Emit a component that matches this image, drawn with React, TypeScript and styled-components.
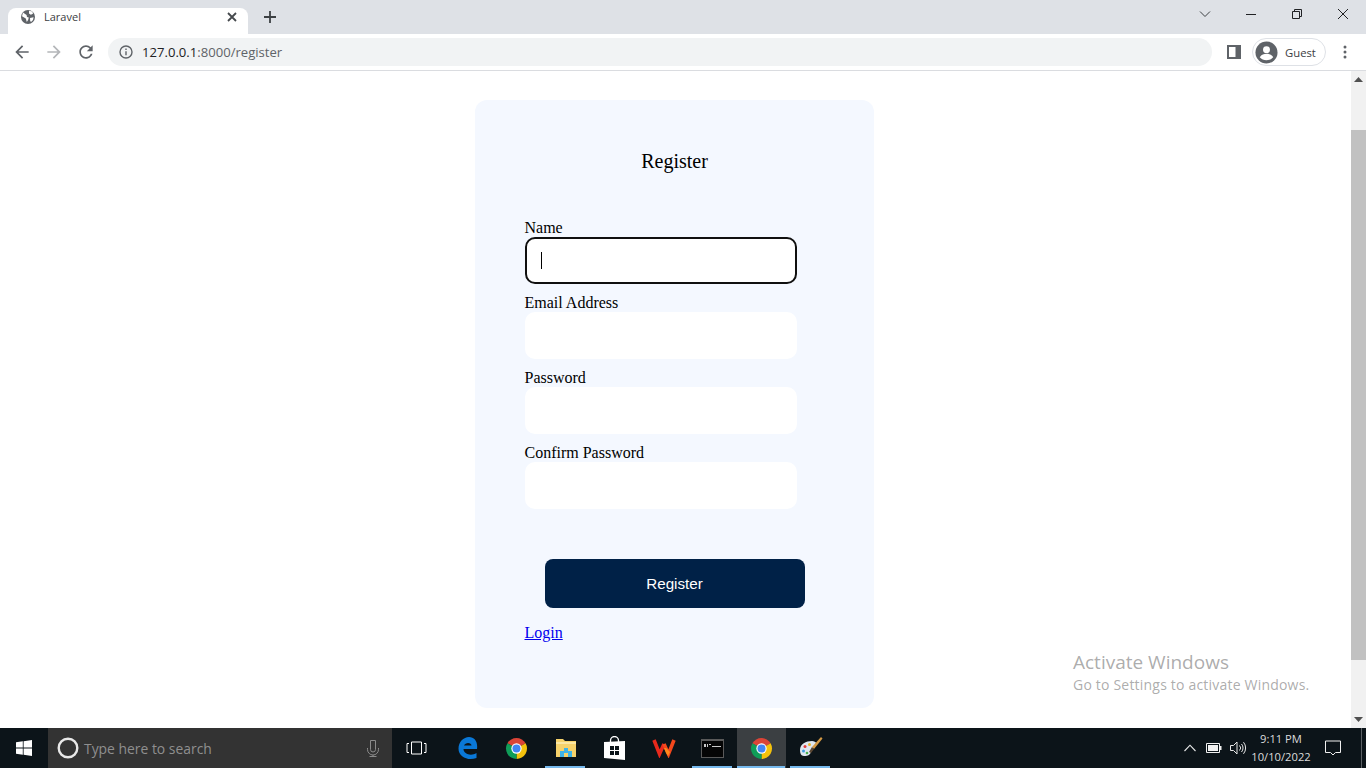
import styled, { createGlobalStyle } from 'styled-components';

const GlobalStyle = createGlobalStyle`
    html, body {
        margin: 0;
        padding: 0;
        height: 100%;
        overflow: hidden;
    }
    * {
        box-sizing: border-box;
    }
`;

const Screen = styled.div`
    width: 1366px;
    height: 768px;
    display: flex;
    flex-direction: column;
    background-color: #fff;
    font-family: "Liberation Serif", "Times New Roman", serif;
    overflow: hidden;
`;

/* browser chrome */
const TabStrip = styled.div`
    height: 34px;
    flex-shrink: 0;
    display: flex;
    align-items: flex-end;
    background-color: #dee1e6;
`;

const Tab = styled.div`
    width: 240px;
    height: 26px;
    margin-left: 8px;
    padding: 0 8px 8px 12px;
    display: flex;
    align-items: center;
    background-color: #fff;
    border-radius: 8px 8px 0 0;
`;

const TabTitle = styled.span`
    flex: 1;
    margin-left: 8px;
    padding-bottom: 2px;
    font-family: "Open Sans", sans-serif;
    font-size: 11px;
    color: #3c4043;
`;

const NewTab = styled.div`
    width: 28px;
    height: 26px;
    margin-left: 8px;
    padding-bottom: 8px;
    display: flex;
    align-items: center;
    justify-content: center;
`;

const WindowControls = styled.div`
    height: 34px;
    margin-left: auto;
    display: flex;
`;

const WindowButton = styled.div`
    width: 46px;
    height: 28px;
    display: flex;
    align-items: center;
    justify-content: center;
`;

const Toolbar = styled.div`
    height: 37px;
    flex-shrink: 0;
    padding: 0 5px 0 6px;
    display: flex;
    align-items: center;
    background-color: #fff;
    border-bottom: 1px solid #dadce0;
`;

const NavButton = styled.div`
    width: 32px;
    height: 28px;
    display: flex;
    align-items: center;
    justify-content: center;
`;

const Omnibox = styled.div`
    flex: 1;
    height: 28px;
    margin: 0 6px;
    padding-left: 10px;
    display: flex;
    align-items: center;
    background-color: #f1f3f4;
    border-radius: 14px;
`;

const Url = styled.span`
    margin-left: 8px;
    font-family: "Open Sans", sans-serif;
    font-size: 13.1px;
    color: #5f6368;
`;

const Host = styled.span`
    color: #202124;
`;

const GuestPill = styled.div`
    width: 74px;
    height: 28px;
    margin: 0 3px 0 2px;
    padding-left: 2px;
    display: flex;
    align-items: center;
    gap: 7px;
    border: 1px solid #dee1e6;
    border-radius: 14px;
    font-family: "Open Sans", sans-serif;
    font-size: 11.3px;
    color: #3c4043;
`;

/* page */
const Viewport = styled.div`
    flex: 1;
    min-height: 0;
    display: flex;
    position: relative;
`;

const Page = styled.main`
    flex: 1;
    padding: 29px 2px 0 0;
    display: flex;
    justify-content: center;
    align-items: flex-start;
`;

const Card = styled.form`
    width: 399px;
    height: 608px;
    padding: 50px 49.5px 0;
    background-color: #f4f8ff;
    border-radius: 12px;
`;

const Title = styled.div`
    margin-bottom: 46px;
    font-size: 20px;
    line-height: 23px;
    text-align: center;
    color: #000;
`;

const Label = styled.label`
    display: block;
    font-size: 16px;
    line-height: 18px;
    color: #000;
`;

const Field = styled.div<{ $focused?: boolean }>`
    width: 272px;
    height: 47px;
    margin-bottom: 10px;
    padding-left: 14px;
    display: flex;
    align-items: center;
    background-color: #fff;
    border-radius: 10px;
    border: ${p => (p.$focused ? '2px solid #101010' : '2px solid #fff')};
`;

const Caret = styled.span`
    width: 1px;
    height: 17px;
    background-color: #000;
`;

const SubmitButton = styled.button`
    display: block;
    width: 260px;
    height: 49px;
    margin: 50px auto 0;
    padding: 0;
    border: none;
    border-radius: 8px;
    background-color: #002147;
    color: #fff;
    font-family: "Liberation Sans", Arial, sans-serif;
    font-size: 15.2px;
`;

const LoginLink = styled.a`
    display: block;
    margin-top: 16px;
    font-size: 16px;
    line-height: 18px;
    color: #0000ee;
    text-decoration: underline;
`;

const Scrollbar = styled.div`
    width: 15px;
    flex-shrink: 0;
    display: flex;
    flex-direction: column;
    align-items: center;
    background-color: #f1f1f1;
`;

const ScrollArrow = styled.div`
    width: 15px;
    height: 17px;
    display: flex;
    align-items: center;
    justify-content: center;
`;

const ScrollThumb = styled.div`
    width: 15px;
    height: 530px;
    margin: 42px 0 auto;
    background-color: #c1c1c1;
`;

const Watermark = styled.div`
    position: absolute;
    left: 1073px;
    top: 578px;
    font-family: "Open Sans", sans-serif;
    color: rgba(120, 120, 120, 0.62);
`;

const WatermarkTitle = styled.div`
    font-size: 19px;
    line-height: 26px;
`;

const WatermarkText = styled.div`
    font-size: 14px;
    line-height: 19px;
    letter-spacing: 0.2px;
    white-space: nowrap;
`;

/* taskbar */
const Taskbar = styled.footer`
    height: 40px;
    flex-shrink: 0;
    display: flex;
    align-items: stretch;
    background-color: #0c1419;
`;

const StartButton = styled.div`
    width: 48px;
    display: flex;
    align-items: center;
    justify-content: center;
`;

const SearchBox = styled.div`
    width: 344px;
    padding: 0 12px 0 9px;
    display: flex;
    align-items: center;
    background-color: #333;
`;

const SearchText = styled.span`
    flex: 1;
    margin-left: 5px;
    font-family: "Open Sans", sans-serif;
    font-size: 13.9px;
    color: #8f8f8f;
`;

const TaskView = styled.div`
    width: 51px;
    padding-right: 3px;
    display: flex;
    align-items: center;
    justify-content: center;
`;

const AppCell = styled.div<{ $open?: boolean; $active?: boolean }>`
    width: 49px;
    position: relative;
    display: flex;
    align-items: center;
    justify-content: center;
    background-color: ${p => (p.$active ? '#3b3f42' : 'transparent')};

    &::after {
        content: '';
        display: ${p => (p.$open ? 'block' : 'none')};
        position: absolute;
        bottom: 0;
        left: ${p => (p.$active ? '0' : '4px')};
        right: ${p => (p.$active ? '1px' : '5px')};
        height: 2px;
        background-color: #76b9ed;
    }
`;

const Tray = styled.div`
    margin-left: auto;
    display: flex;
    align-items: stretch;
`;

const TrayIcon = styled.div`
    width: 24px;
    display: flex;
    align-items: center;
    justify-content: center;
`;

const Clock = styled.div`
    width: 62px;
    display: flex;
    flex-direction: column;
    justify-content: center;
    align-items: center;
    font-family: "Open Sans", sans-serif;
    font-size: 11.2px;
    line-height: 18px;
    color: #dcdcdc;
    white-space: nowrap;
`;

const NotifyButton = styled.div`
    width: 42px;
    display: flex;
    align-items: center;
    justify-content: center;
`;

const ShowDesktop = styled.div`
    width: 5px;
    margin-left: 7px;
    border-left: 1px solid #5b6064;
`;

const ChromeIcon = () => (
    <svg width="23" height="23" viewBox="0 0 24 24">
        <path d="M12 12L2.5 6.5A11 11 0 0 1 21.5 6.5Z" fill="#db4437" />
        <path d="M12 12L21.5 6.5A11 11 0 0 1 12 23Z" fill="#f4c20d" />
        <path d="M12 12L12 23A11 11 0 0 1 2.5 6.5Z" fill="#0f9d58" />
        <circle cx="12" cy="12" r="5.4" fill="#fff" />
        <circle cx="12" cy="12" r="4.2" fill="#4285f4" />
    </svg>
);

function App() {
    return (
        <Screen>
            <GlobalStyle />
            <TabStrip>
                <Tab>
                    <svg width="16" height="16" viewBox="0 0 16 16">
                        <circle cx="8" cy="8" r="7" fill="#5f6368" />
                        <path d="M3 3.6L6.6 6l.4 2 1.8.6-.6 2.2L6.8 13 5.8 9.6 2 7.2Z M9 1.8l3.4.8.6 2.2-2.2 1L9 4.4Z M10 9l3.6-.8L13 11l-2 2-.8-1Z" fill="#fff" />
                    </svg>
                    <TabTitle>Laravel</TabTitle>
                    <svg width="16" height="16" viewBox="0 0 16 16">
                        <path d="M4 4l8 8M12 4l-8 8" stroke="#45494d" strokeWidth="1.8" fill="none" />
                    </svg>
                </Tab>
                <NewTab>
                    <svg width="14" height="14" viewBox="0 0 14 14">
                        <path d="M7 1v12M1 7h12" stroke="#3c4043" strokeWidth="1.8" fill="none" />
                    </svg>
                </NewTab>
                <WindowControls>
                    <WindowButton>
                        <svg width="12" height="8" viewBox="0 0 12 8">
                            <path d="M1 1.5l5 5 5-5" stroke="#3c4043" fill="none" />
                        </svg>
                    </WindowButton>
                    <WindowButton>
                        <svg width="12" height="12" viewBox="0 0 12 12">
                            <path d="M1 6.5h10" stroke="#202124" fill="none" />
                        </svg>
                    </WindowButton>
                    <WindowButton>
                        <svg width="12" height="12" viewBox="0 0 12 12">
                            <path d="M1.5 3.5h7v7h-7zM3.5 3.5v-2h7v7h-2" stroke="#202124" fill="none" />
                        </svg>
                    </WindowButton>
                    <WindowButton>
                        <svg width="12" height="12" viewBox="0 0 12 12">
                            <path d="M1 1l10 10M11 1L1 11" stroke="#202124" fill="none" />
                        </svg>
                    </WindowButton>
                </WindowControls>
            </TabStrip>

            <Toolbar>
                <NavButton>
                    <svg width="20" height="20" viewBox="0 0 24 24">
                        <path d="M20 11H7.83l5.59-5.59L12 4l-8 8 8 8 1.41-1.41L7.83 13H20v-2z" fill="#5f6368" />
                    </svg>
                </NavButton>
                <NavButton>
                    <svg width="20" height="20" viewBox="0 0 24 24">
                        <path d="M4 11h12.17l-5.59-5.59L12 4l8 8-8 8-1.41-1.41L16.17 13H4v-2z" fill="#b4b6b9" />
                    </svg>
                </NavButton>
                <NavButton>
                    <svg width="20" height="20" viewBox="0 0 24 24">
                        <path d="M17.65 6.35C16.2 4.9 14.21 4 12 4c-4.42 0-7.99 3.58-7.99 8s3.57 8 7.99 8c3.73 0 6.84-2.55 7.73-6h-2.08c-.82 2.33-3.04 4-5.65 4-3.31 0-6-2.69-6-6s2.69-6 6-6c1.66 0 3.14.69 4.22 1.78L13 11h7V4l-2.35 2.35z" fill="#5f6368" />
                    </svg>
                </NavButton>
                <Omnibox>
                    <svg width="16" height="16" viewBox="0 0 16 16">
                        <circle cx="8" cy="8" r="6" stroke="#5f6368" strokeWidth="1.4" fill="none" />
                        <path d="M8 7.2v4M8 4.6v1.4" stroke="#5f6368" strokeWidth="1.4" fill="none" />
                    </svg>
                    <Url><Host>127.0.0.1</Host>:8000/register</Url>
                </Omnibox>
                <NavButton>
                    <svg width="14" height="14" viewBox="0 0 14 14">
                        <path d="M0 0h14v14H0z M2 2v10h6.5V2z" fill="#5f6368" fillRule="evenodd" />
                    </svg>
                </NavButton>
                <GuestPill>
                    <svg width="23" height="23" viewBox="0 0 24 24">
                        <circle cx="12" cy="12" r="11.5" fill="#5f6368" />
                        <circle cx="12" cy="9" r="3.6" fill="#fff" />
                        <path d="M5 17c1.5-2.8 4.5-3.6 7-3.6s5.500.8 7 3.600c-1.600 2-4.200 3-7 3s-5.400-1-7-3z" fill="#fff" />
                    </svg>
                    Guest
                </GuestPill>
                <NavButton>
                    <svg width="4" height="14" viewBox="0 0 4 14">
                        <circle cx="2" cy="2" r="1.5" fill="#5f6368" />
                        <circle cx="2" cy="7" r="1.5" fill="#5f6368" />
                        <circle cx="2" cy="12" r="1.500" fill="#5f6368" />
                    </svg>
                </NavButton>
            </Toolbar>

            <Viewport>
                <Page>
                    <Card>
                        <Title>Register</Title>
                        <Label>Name</Label>
                        <Field $focused><Caret /></Field>
                        <Label>Email Address</Label>
                        <Field />
                        <Label>Password</Label>
                        <Field />
                        <Label>Confirm Password</Label>
                        <Field />
                        <SubmitButton type="button">Register</SubmitButton>
                        <LoginLink href="#">Login</LoginLink>
                    </Card>
                </Page>
                <Scrollbar>
                    <ScrollArrow>
                        <svg width="9" height="5" viewBox="0 0 9 5"><path d="M4.500 0L9 5H0z" fill="#505050" /></svg>
                    </ScrollArrow>
                    <ScrollThumb />
                    <ScrollArrow>
                        <svg width="9" height="5" viewBox="0 0 9 5"><path d="M0 0h9L4.500 5z" fill="#505050" /></svg>
                    </ScrollArrow>
                </Scrollbar>
                <Watermark>
                    <WatermarkTitle>Activate Windows</WatermarkTitle>
                    <WatermarkText>Go to Settings to activate Windows.</WatermarkText>
                </Watermark>
            </Viewport>

            <Taskbar>
                <StartButton>
                    <svg width="16" height="16" viewBox="0 0 16 16">
                        <path d="M0 2.300l6.800-1v6.300H0zM7.600 1.200L16 0v7.600H7.600zM0 8.400h6.800v6.300L0 13.700zM7.600 8.400H16V16l-8.400-1.200z" fill="#fff" />
                    </svg>
                </StartButton>
                <SearchBox>
                    <svg width="22" height="22" viewBox="0 0 22 22">
                        <circle cx="11" cy="11" r="9.300" stroke="#e8e8e8" strokeWidth="2.400" fill="none" />
                    </svg>
                    <SearchText>Type here to search</SearchText>
                    <svg width="14" height="18" viewBox="0 0 14 18">
                        <path d="M4.500 1.500h5v9a2.500 2.500 0 0 1-5 0zM1.500 9v1.500a5.500 5.500 0 0 0 11 0V9M7 16v1.500M3.500 17.500h7" stroke="#8a8a8a" fill="none" />
                    </svg>
                </SearchBox>
                <TaskView>
                    <svg width="21" height="14" viewBox="0 0 21 14">
                        <path d="M5.500 1h10v12h-10zM3 2.500H1v9h2M18 2.500h2v9h-2" stroke="#fff" fill="none" />
                    </svg>
                </TaskView>
                <AppCell>
                    <svg width="22" height="24" viewBox="0 0 22 24">
                        <path d="M20 13H6.500c0 5 7.500 7.500 13 4v5c-8 3-18 -.5-18-9.500C1.500 6 6.500 1 12 1c5.500 0 9 4.500 8 12zM14.500 9.500C14.500 6 8 6 7 9.500z" fill="#0a78d7" fillRule="evenodd" />
                    </svg>
                </AppCell>
                <AppCell><ChromeIcon /></AppCell>
                <AppCell $open>
                    <svg width="22" height="20" viewBox="0 0 22 20">
                        <path d="M1 1h7l2 2h11v16H1z" fill="#f6d26b" />
                        <path d="M1 4h20v2H1z" fill="#fbe7a3" />
                        <path d="M5 19v-6h4v-3h4v3h4v6z" fill="#3fb4e8" />
                        <path d="M9 19v-4h4v4z" fill="#f6d26b" />
                    </svg>
                </AppCell>
                <AppCell>
                    <svg width="21" height="24" viewBox="0 0 21 24">
                        <path d="M6.500 6V4.500a4 4 0 0 1 8 0V6" stroke="#fff" strokeWidth="1.300" fill="none" />
                        <path d="M0 6l21 -1v19L0 22z" fill="#fff" />
                        <path d="M6 10h4v4H6zM11 10h4v4h-4zM6 15h4v4H6zM11 15h4v4h-4z" fill="#0c1419" />
                    </svg>
                </AppCell>
                <AppCell>
                    <svg width="24" height="20" viewBox="0 0 24 20">
                        <path d="M2 2l5.500 14L12 6" stroke="#e8291c" strokeWidth="3.600" fill="none" />
                        <path d="M12 6l4.500 10L22 2" stroke="#f4481c" strokeWidth="3.600" fill="none" />
                        <path d="M12 10l2 5 2 3 2-4-4-4z" fill="#ff8a1a" />
                    </svg>
                </AppCell>
                <AppCell $open>
                    <svg width="23" height="19" viewBox="0 0 23 19">
                        <path d="M0 0h23v19H0z" fill="#5a5a5a" />
                        <path d="M1 2h21v16H1z" fill="#050505" />
                        <path d="M3 5h2v3H3zM6 5h1v3H6zM8 5h2v1H8zM11 7h9v1h-9z" fill="#c8c8c8" />
                    </svg>
                </AppCell>
                <AppCell $open $active><ChromeIcon /></AppCell>
                <AppCell $open>
                    <svg width="24" height="24" viewBox="0 0 24 24">
                        <path d="M1 14C1 8 7 5 13 5c2 0 4 1 4 2l-4 7-2 4c-2 2-4 2-6 2-3 0-4-3-4-6z" fill="#dfe7f0" />
                        <circle cx="6" cy="10.500" r="1.500" fill="#e23b3b" />
                        <circle cx="10.500" cy="8.500" r="1.500" fill="#e9b52e" />
                        <circle cx="4.500" cy="15" r="1.500" fill="#3f9be0" />
                        <circle cx="8" cy="17" r="1.300" fill="#49b04f" />
                        <path d="M22 1l1.500 1.500L15 13l-2-2z" fill="#d59a45" />
                        <path d="M13 11l2 2-3 4-2-1z" fill="#5a4632" />
                    </svg>
                </AppCell>
                <Tray>
                    <TrayIcon>
                        <svg width="12" height="8" viewBox="0 0 12 8">
                            <path d="M.5 7L6 1.200 11.500 7" stroke="#e8e8e8" strokeWidth="1.100" fill="none" />
                        </svg>
                    </TrayIcon>
                    <TrayIcon>
                        <svg width="16" height="10" viewBox="0 0 16 10">
                            <path d="M.500.500h13v9H.500z" stroke="#f0f0f0" fill="none" />
                            <path d="M2 2h10v6H2zM14 3h1.500v4H14z" fill="#f0f0f0" />
                        </svg>
                    </TrayIcon>
                    <TrayIcon>
                        <svg width="17" height="14" viewBox="0 0 17 14">
                            <path d="M.500 4.500h3L7 1v12L3.500 9.500h-3zM9.500 4.500a3.500 3.500 0 0 1 0 5M11.500 3a6 6 0 0 1 0 8M13.500 1.200a9 9 0 0 1 0 11.600" stroke="#e8e8e8" fill="none" />
                        </svg>
                    </TrayIcon>
                    <Clock>
                        <span>9:11 PM</span>
                        <span>10/10/2022</span>
                    </Clock>
                    <NotifyButton>
                        <svg width="16" height="16" viewBox="0 0 16 16">
                            <path d="M.500 1h15v11.500h-5L8 15l-2.500-2.500h-5z" stroke="#f0f0f0" fill="none" />
                        </svg>
                    </NotifyButton>
                    <ShowDesktop />
                </Tray>
            </Taskbar>
        </Screen>
    );
}

export default App;
